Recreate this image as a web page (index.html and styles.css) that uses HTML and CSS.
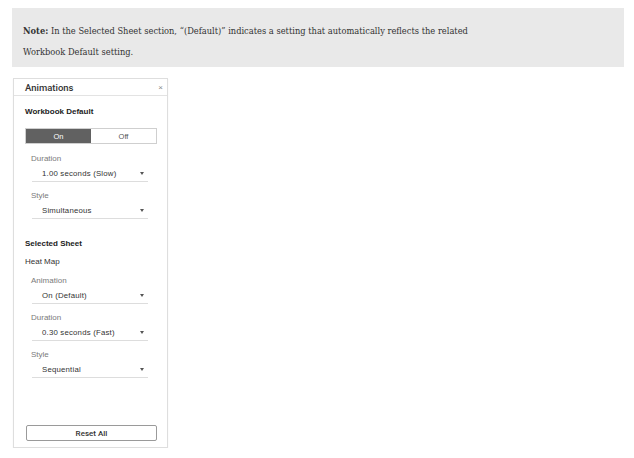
FILE: index.html
```html
<!DOCTYPE html>
<html>
<head>
<meta charset="utf-8">
<link rel="stylesheet" href="styles.css">
</head>
<body>
<div class="note"><p class="note-text"><b>Note:</b> In the Selected Sheet section, “(Default)” indicates a setting that automatically reflects the related Workbook Default setting.</p></div>
<div class="panel">
  <div class="panel-head"><span class="panel-title">Animations</span><span class="close">×</span></div>
  <div class="panel-body">
    <div class="section-title">Workbook Default</div>
    <div class="toggle"><span class="seg seg-on">On</span><span class="seg seg-off">Off</span></div>
    <div class="field">
      <div class="field-label">Duration</div>
      <div class="select"><span>1.00 seconds (Slow)</span><span class="caret"></span></div>
    </div>
    <div class="field">
      <div class="field-label">Style</div>
      <div class="select"><span>Simultaneous</span><span class="caret"></span></div>
    </div>
    <div class="section-title section-gap">Selected Sheet</div>
    <div class="sheet-name">Heat Map</div>
    <div class="field">
      <div class="field-label">Animation</div>
      <div class="select"><span>On (Default)</span><span class="caret"></span></div>
    </div>
    <div class="field">
      <div class="field-label">Duration</div>
      <div class="select"><span>0.30 seconds (Fast)</span><span class="caret"></span></div>
    </div>
    <div class="field">
      <div class="field-label">Style</div>
      <div class="select"><span>Sequential</span><span class="caret"></span></div>
    </div>
    <div class="reset">Reset All</div>
  </div>
</div>
</body>
</html>
```
FILE: styles.css
```css
body {
  margin: 0;
  background: #ffffff;
  font-family: "Liberation Sans", Arial, sans-serif;
}
.note {
  margin: 8px 10px 0 12px;
  height: 59px;
  box-sizing: border-box;
  background: #e9e9e9;
  padding: 13px 11px 0 11px;
}
.note-text {
  margin: 0;
  max-width: 450px;
  font-family: "DejaVu Serif", "Liberation Serif", serif;
  font-size: 8.3px;
  line-height: 21px;
  color: #333333;
}
.panel {
  margin: 11px 0 0 13px;
  width: 155px;
  height: 370px;
  box-sizing: border-box;
  border: 1px solid #dedede;
  box-shadow: 0 1px 1px rgba(0,0,0,0.08);
  display: flex;
  flex-direction: column;
  color: #333333;
}
.panel-head {
  height: 16px;
  border-bottom: 1px solid #e3e3e3;
  display: flex;
  align-items: center;
  justify-content: space-between;
  padding: 0 4px 0 11px;
}
.panel-title {
  font-family: Roboto, "Liberation Sans", sans-serif;
  font-weight: 500;
  font-size: 9.5px;
  color: #333333;
}
.close {
  font-size: 8px;
  color: #888888;
}
.panel-body {
  flex: 1;
  display: flex;
  flex-direction: column;
  padding: 10px 10px 6px 11px;
}
.section-title {
  font-weight: bold;
  font-size: 8px;
  line-height: 12px;
  color: #222222;
}
.section-gap {
  margin-top: 11px;
}
.toggle {
  margin-top: 10px;
  height: 16px;
  display: flex;
  border: 1px solid #cfcfcf;
  box-sizing: border-box;
}
.seg {
  flex: 0 0 auto;
  display: flex;
  align-items: center;
  justify-content: center;
  font-size: 7.5px;
}
.seg-on {
  width: 65px;
  background: #616161;
  color: #ffffff;
}
.seg-off {
  flex: 1;
  background: #ffffff;
  color: #555555;
}
.sheet-name {
  margin-top: 6px;
  font-size: 8px;
  line-height: 12px;
  color: #333333;
}
.toggle + .field {
  margin-top: 9px;
}
.sheet-name + .field {
  margin-top: 7px;
}
.field {
  margin: 0 9px 8px 6px;
}
.field-label {
  font-size: 8px;
  line-height: 12px;
  color: #7a7a7a;
  margin-bottom: 2px;
}
.select {
  margin-left: 1px;
  display: flex;
  align-items: center;
  justify-content: space-between;
  padding: 0 4px 2px 10px;
  height: 12px;
  border-bottom: 1px solid #dddddd;
  font-size: 7.8px;
  letter-spacing: 0.2px;
  color: #333333;
}
.caret {
  width: 0;
  height: 0;
  border-left: 2.5px solid transparent;
  border-right: 2.5px solid transparent;
  border-top: 3px solid #555555;
}
.reset {
  margin-top: auto;
  height: 16px;
  box-sizing: border-box;
  border: 1px solid #9a9a9a;
  border-radius: 2px;
  margin-left: 1px;
  display: flex;
  align-items: center;
  justify-content: center;
  font-family: Roboto, "Liberation Sans", sans-serif;
  font-weight: 500;
  font-size: 8px;
  color: #333333;
}
```
